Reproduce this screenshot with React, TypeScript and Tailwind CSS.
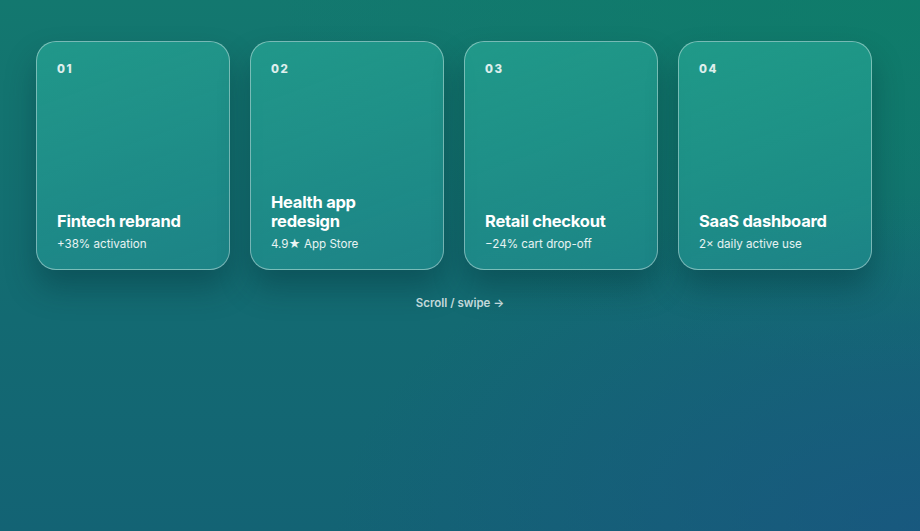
import React from 'react';

type Project = {
  num: string;
  title: string;
  stat: string;
};

const projects: Project[] = [
  { num: '01', title: 'Fintech rebrand', stat: '+38% activation' },
  { num: '02', title: 'Health app redesign', stat: '4.9★ App Store' },
  { num: '03', title: 'Retail checkout', stat: '−24% cart drop-off' },
  { num: '04', title: 'SaaS dashboard', stat: '2× daily active use' },
];

const Card: React.FC<{ project: Project }> = ({ project }) => (
  <div className="flex h-[229px] w-[194px] shrink-0 flex-col justify-between rounded-[20px] border border-white/40 bg-[linear-gradient(160deg,rgba(45,180,160,0.55),rgba(40,160,160,0.45))] px-5 pt-[19px] pb-[17px] shadow-[0_18px_30px_rgba(0,40,50,0.35)]">
    <div className="text-[11.5px] font-extrabold tracking-[0.14em] text-white/85">{project.num}</div>
    <div>
      <h3 className="text-[16.5px] leading-[19px] font-bold tracking-[-0.015em] text-white">{project.title}</h3>
      <p className="mt-[5px] text-[11.6px] leading-[16px] text-white/90">{project.stat}</p>
    </div>
  </div>
);

const App: React.FC = () => {
  return (
    <div
      className="min-h-screen w-full bg-[radial-gradient(ellipse_at_100%_100%,rgba(26,85,130,0.75),rgba(26,85,130,0)_45%),radial-gradient(ellipse_at_100%_0%,rgba(14,125,105,0.8),rgba(14,125,105,0)_50%),linear-gradient(180deg,#13786f_0%,#136a72_60%,#136374_100%)]"
      style={{ fontFamily: 'Inter, "Noto Sans", "Liberation Sans", sans-serif' }}
    >
      <div className="flex gap-5 px-9 pt-[41px]">
        {projects.map(p => (
          <Card key={p.num} project={p} />
        ))}
      </div>
      <div className="mt-[25px] text-center text-[11.5px] font-semibold text-white/75">
        Scroll / swipe →
      </div>
    </div>
  );
};

export default App;
